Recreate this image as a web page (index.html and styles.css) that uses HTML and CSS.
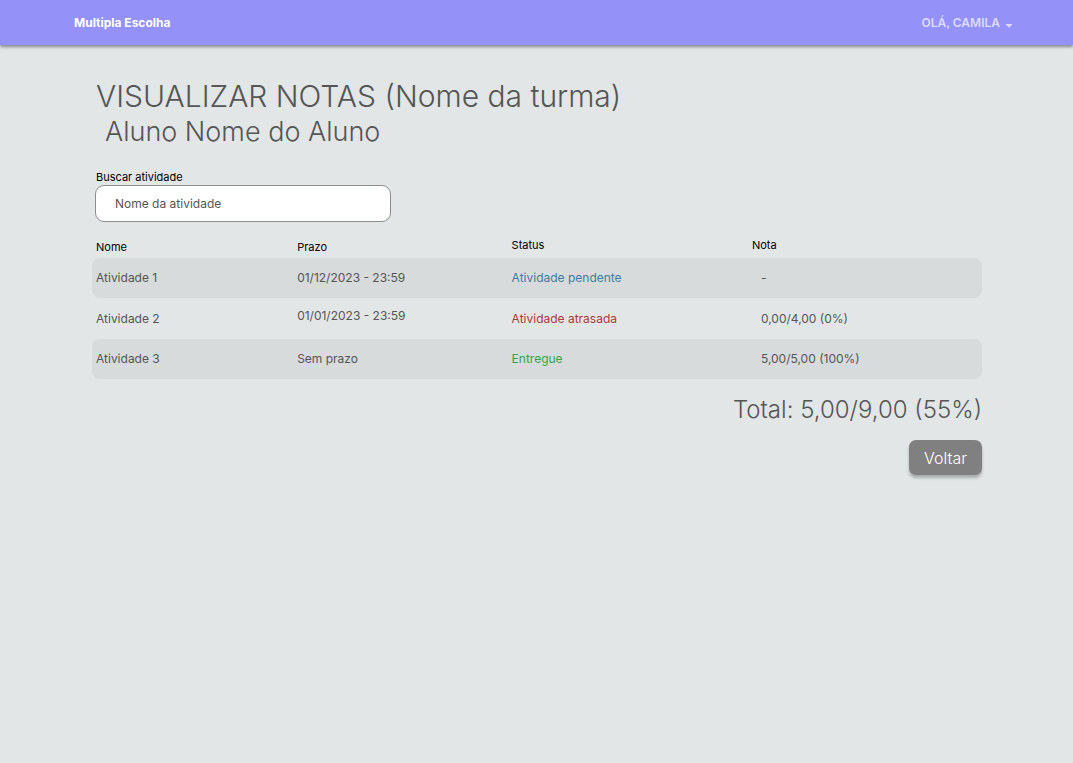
FILE: index.html
```
<!DOCTYPE html>
<html lang="pt-BR">
<head>
<meta charset="utf-8">
<meta name="viewport" content="width=device-width, initial-scale=1">
<title>Visualizar notas</title>
<link rel="stylesheet" href="styles.css">
</head>
<body>
<header class="topbar">
  <a class="brand" href="#">Multipla Escolha</a>
  <button class="user-menu" type="button">OLÁ, CAMILA
    <svg class="caret" viewBox="0 0 8 4" aria-hidden="true"><path d="M0.5 0h7L4 3.8z" fill="currentColor"/></svg>
  </button>
</header>
<main class="content">
  <h1 class="title">VISUALIZAR NOTAS (Nome da turma)</h1>
  <h2 class="subtitle">Aluno Nome do Aluno</h2>
  <form class="search">
    <label class="search-label" for="busca">Buscar atividade</label>
    <input class="search-input" id="busca" type="text" placeholder="Nome da atividade">
  </form>
  <table class="grades">
    <thead>
      <tr><th class="col-name low">Nome</th><th class="col-due low">Prazo</th><th class="col-status">Status</th><th class="col-grade">Nota</th></tr>
    </thead>
    <tbody>
      <tr><td>Atividade 1</td><td>01/12/2023 - 23:59</td><td class="pending">Atividade pendente</td><td class="grade">-</td></tr>
      <tr><td>Atividade 2</td><td class="raised">01/01/2023 - 23:59</td><td class="late">Atividade atrasada</td><td class="grade">0,00/4,00 (0%)</td></tr>
      <tr><td>Atividade 3</td><td>Sem prazo</td><td class="done">Entregue</td><td class="grade">5,00/5,00 (100%)</td></tr>
    </tbody>
  </table>
  <p class="total">Total: 5,00/9,00 (55%)</p>
  <button class="back" type="button">Voltar</button>
</main>
</body>
</html>
```
FILE: styles.css
```
* { box-sizing: border-box; }

body {
  margin: 0;
  min-height: 100vh;
  background: #e2e6e7;
  color: #555;
  font-family: Inter, "Liberation Sans", sans-serif;
  font-size: 12px;
  font-weight: 370;
}

.topbar {
  display: flex;
  align-items: center;
  justify-content: space-between;
  height: 45px;
  padding: 0 60px 0 74px;
  background: #9491f8;
  box-shadow: 0 2px 3px rgba(0, 0, 0, 0.4);
}

.brand {
  color: #fff;
  font-weight: 700;
  text-decoration: none;
}

.user-menu {
  display: flex;
  align-items: center;
  gap: 5px;
  padding: 0;
  border: 0;
  background: none;
  color: #dddcfd;
  font: inherit;
  font-weight: 600;
}

.caret {
  width: 8px;
  height: 4px;
  margin-top: 6px;
}

.content {
  display: flex;
  flex-direction: column;
  padding: 32px 91px 32px 92px;
}

.title {
  margin: 0 0 0 4px;
  font-size: 30px;
  line-height: 38px;
  font-weight: 360;
}

.subtitle {
  margin: 0 0 0 13px;
  font-size: 27px;
  line-height: 34px;
  font-weight: 360;
}

.search {
  display: flex;
  flex-direction: column;
  margin: 20px 0 0 3px;
}

.search-label {
  margin-left: 1px;
  color: #000;
  font-size: 11px;
  line-height: 16px;
}

.search-input {
  width: 296px;
  max-width: 100%;
  height: 37px;
  padding: 0 19px;
  border: 1px solid #8b8d8e;
  border-radius: 9px;
  background: #fff;
  color: #555;
  font: inherit;
}

.search-input::placeholder {
  color: #555;
  opacity: 1;
}

.grades {
  width: 100%;
  margin-top: 12px;
  border-collapse: separate;
  border-spacing: 0;
  table-layout: fixed;
}

.grades th {
  height: 24px;
  padding: 0 0 2px 4px;
  color: #000;
  font-size: 11px;
  line-height: 16px;
  font-weight: inherit;
  text-align: left;
}

.grades .low { padding: 2px 0 0 4px; }

.col-name { width: 22.6%; }
.col-due { width: 24.1%; }
.col-status { width: 27%; }
.col-grade { width: 26.3%; }

.grades td {
  height: 40px;
  padding: 0 0 0 4px;
  line-height: 16px;
}

.grades tr:nth-child(even) td { height: 41px; }
.grades tbody tr:nth-child(odd) td { background: #d8dbdc; }
.grades td:first-child { border-radius: 8px 0 0 8px; }
.grades td:last-child { border-radius: 0 8px 8px 0; }
.grades .grade { padding-left: 13px; }
.grades .raised { padding-bottom: 6px; }

.grades .pending { color: #3b7ea1; }
.grades .late { color: #ac3939; }
.grades .done { color: #3ba149; }

.total {
  margin: 16px 0 0;
  font-size: 24px;
  line-height: 30px;
  font-weight: 330;
  text-align: right;
}

.back {
  align-self: flex-end;
  height: 35px;
  margin-top: 15px;
  padding: 0 15px;
  border: 0;
  border-radius: 7px;
  background: #808080;
  box-shadow: 0 3px 3px rgba(0, 0, 0, 0.25);
  color: #fff;
  font: inherit;
  font-size: 16px;
  font-weight: 330;
}
```
